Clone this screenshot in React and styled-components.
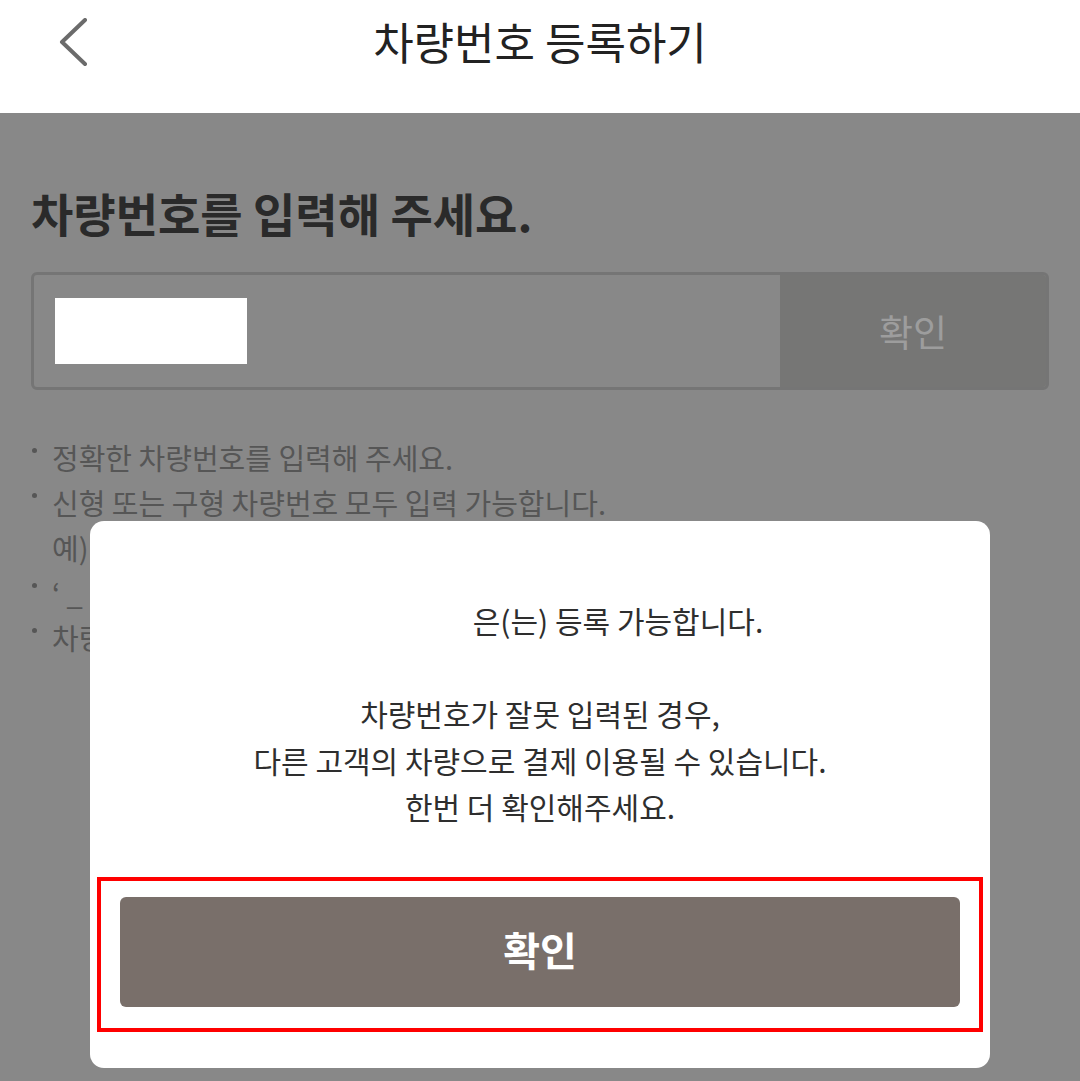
import React from "react";
import styled, { createGlobalStyle } from "styled-components";

const Global = createGlobalStyle`
  html, body { margin: 0; padding: 0; background: #888888; }
  body { font-family: "Noto Sans CJK KR", "Noto Sans", sans-serif; }
  * { box-sizing: border-box; }
`;

const Screen = styled.div`
  position: relative;
  width: 1080px;
  height: 1081px;
  overflow: hidden;
  background: #888888;
`;

const Header = styled.header`
  display: grid;
  grid-template-columns: 100px 1fr 100px;
  align-items: start;
  height: 113px;
  background: #ffffff;
  padding-top: 12px;
`;

const BackButton = styled.button`
  border: 0;
  background: none;
  padding: 6px 0 0 58px;
  display: flex;
  cursor: pointer;
`;

const HeaderTitle = styled.h1`
  margin: 0;
  text-align: center;
  font-size: 44px;
  line-height: 58px;
  font-weight: 400;
  color: #222222;
  letter-spacing: 0;
`;

const Content = styled.main`
  padding: 72px 31px 0 31px;
`;

const Title = styled.h2`
  margin: 0;
  font-size: 46px;
  line-height: 54px;
  font-weight: 700;
  color: #2a2a2a;
  letter-spacing: 0;
`;

const InputBox = styled.div`
  display: flex;
  margin-top: 33px;
  height: 118px;
  border: 3px solid #757575;
  border-radius: 6px;
  overflow: hidden;
`;

const Field = styled.div`
  flex: 1;
  display: flex;
  align-items: center;
  padding-left: 21px;
`;

const Masked = styled.div`
  width: 192px;
  height: 66px;
  background: #ffffff;
`;

const CheckButton = styled.button`
  width: 266px;
  border: 0;
  background: #767675;
  color: #9d9d9d;
  font-family: inherit;
  font-size: 37px;
  letter-spacing: 0;
`;

const Notes = styled.ul`
  list-style: none;
  margin: 45px 0 0 0;
  padding: 0;
`;

const Note = styled.li`
  position: relative;
  padding-left: 21px;
  font-size: 29px;
  line-height: 45px;
  color: #565656;
  letter-spacing: 0;
  white-space: nowrap;
  &::before {
    content: "";
    display: ${(p) => (p.$plain ? "none" : "block")};
    position: absolute;
    left: 1px;
    top: 13px;
    width: 5px;
    height: 5px;
    border-radius: 50%;
    background: #565656;
  }
`;

const Modal = styled.section`
  position: absolute;
  left: 90px;
  top: 521px;
  width: 900px;
  background: #ffffff;
  border-radius: 14px;
  padding: 76px 7px 36px 7px;
  display: flex;
  flex-direction: column;
  align-items: stretch;
`;

const Message = styled.p`
  margin: 0;
  text-align: center;
  font-size: 30px;
  line-height: 46.5px;
  color: #2e2e2e;
  letter-spacing: 0;
`;

const Hidden = styled.span`
  display: inline-block;
  width: 156px;
`;

const Highlight = styled.div`
  margin-top: 47px;
  border: 4px solid #ff0000;
  padding: 16px 19px 21px 19px;
`;

const ConfirmButton = styled.button`
  width: 100%;
  height: 110px;
  border: 0;
  border-radius: 6px;
  background: #796f6a;
  color: #ffffff;
  font-family: inherit;
  font-size: 40px;
  font-weight: 700;
  letter-spacing: 0;
  padding-bottom: 6px;
`;

export default function App() {
  return (
    <>
      <Global />
      <Screen>
        <Header>
          <BackButton aria-label="뒤로">
            <svg width="32" height="50" viewBox="0 0 32 50">
              <polyline
                points="27,2 4,24 27,46"
                fill="none"
                stroke="#6b6b6b"
                strokeWidth="4"
                strokeLinecap="round"
                strokeLinejoin="round"
              />
            </svg>
          </BackButton>
          <HeaderTitle>차량번호 등록하기</HeaderTitle>
          <div />
        </Header>
        <Content>
          <Title>차량번호를 입력해 주세요.</Title>
          <InputBox>
            <Field>
              <Masked />
            </Field>
            <CheckButton>확인</CheckButton>
          </InputBox>
          <Notes>
            <Note>정확한 차량번호를 입력해 주세요.</Note>
            <Note>신형 또는 구형 차량번호 모두 입력 가능합니다.</Note>
            <Note $plain>예) 12가3456</Note>
            <Note>‘ _ ’ 없이 입력해 주세요.</Note>
            <Note>차량 5대까지 등록 가능</Note>
          </Notes>
        </Content>
        <Modal>
          <Message>
            <Hidden />은(는) 등록 가능합니다.
          </Message>
          <Message>&nbsp;</Message>
          <Message>차량번호가 잘못 입력된 경우,</Message>
          <Message>다른 고객의 차량으로 결제 이용될 수 있습니다.</Message>
          <Message>한번 더 확인해주세요.</Message>
          <Highlight>
            <ConfirmButton>확인</ConfirmButton>
          </Highlight>
        </Modal>
      </Screen>
    </>
  );
}
